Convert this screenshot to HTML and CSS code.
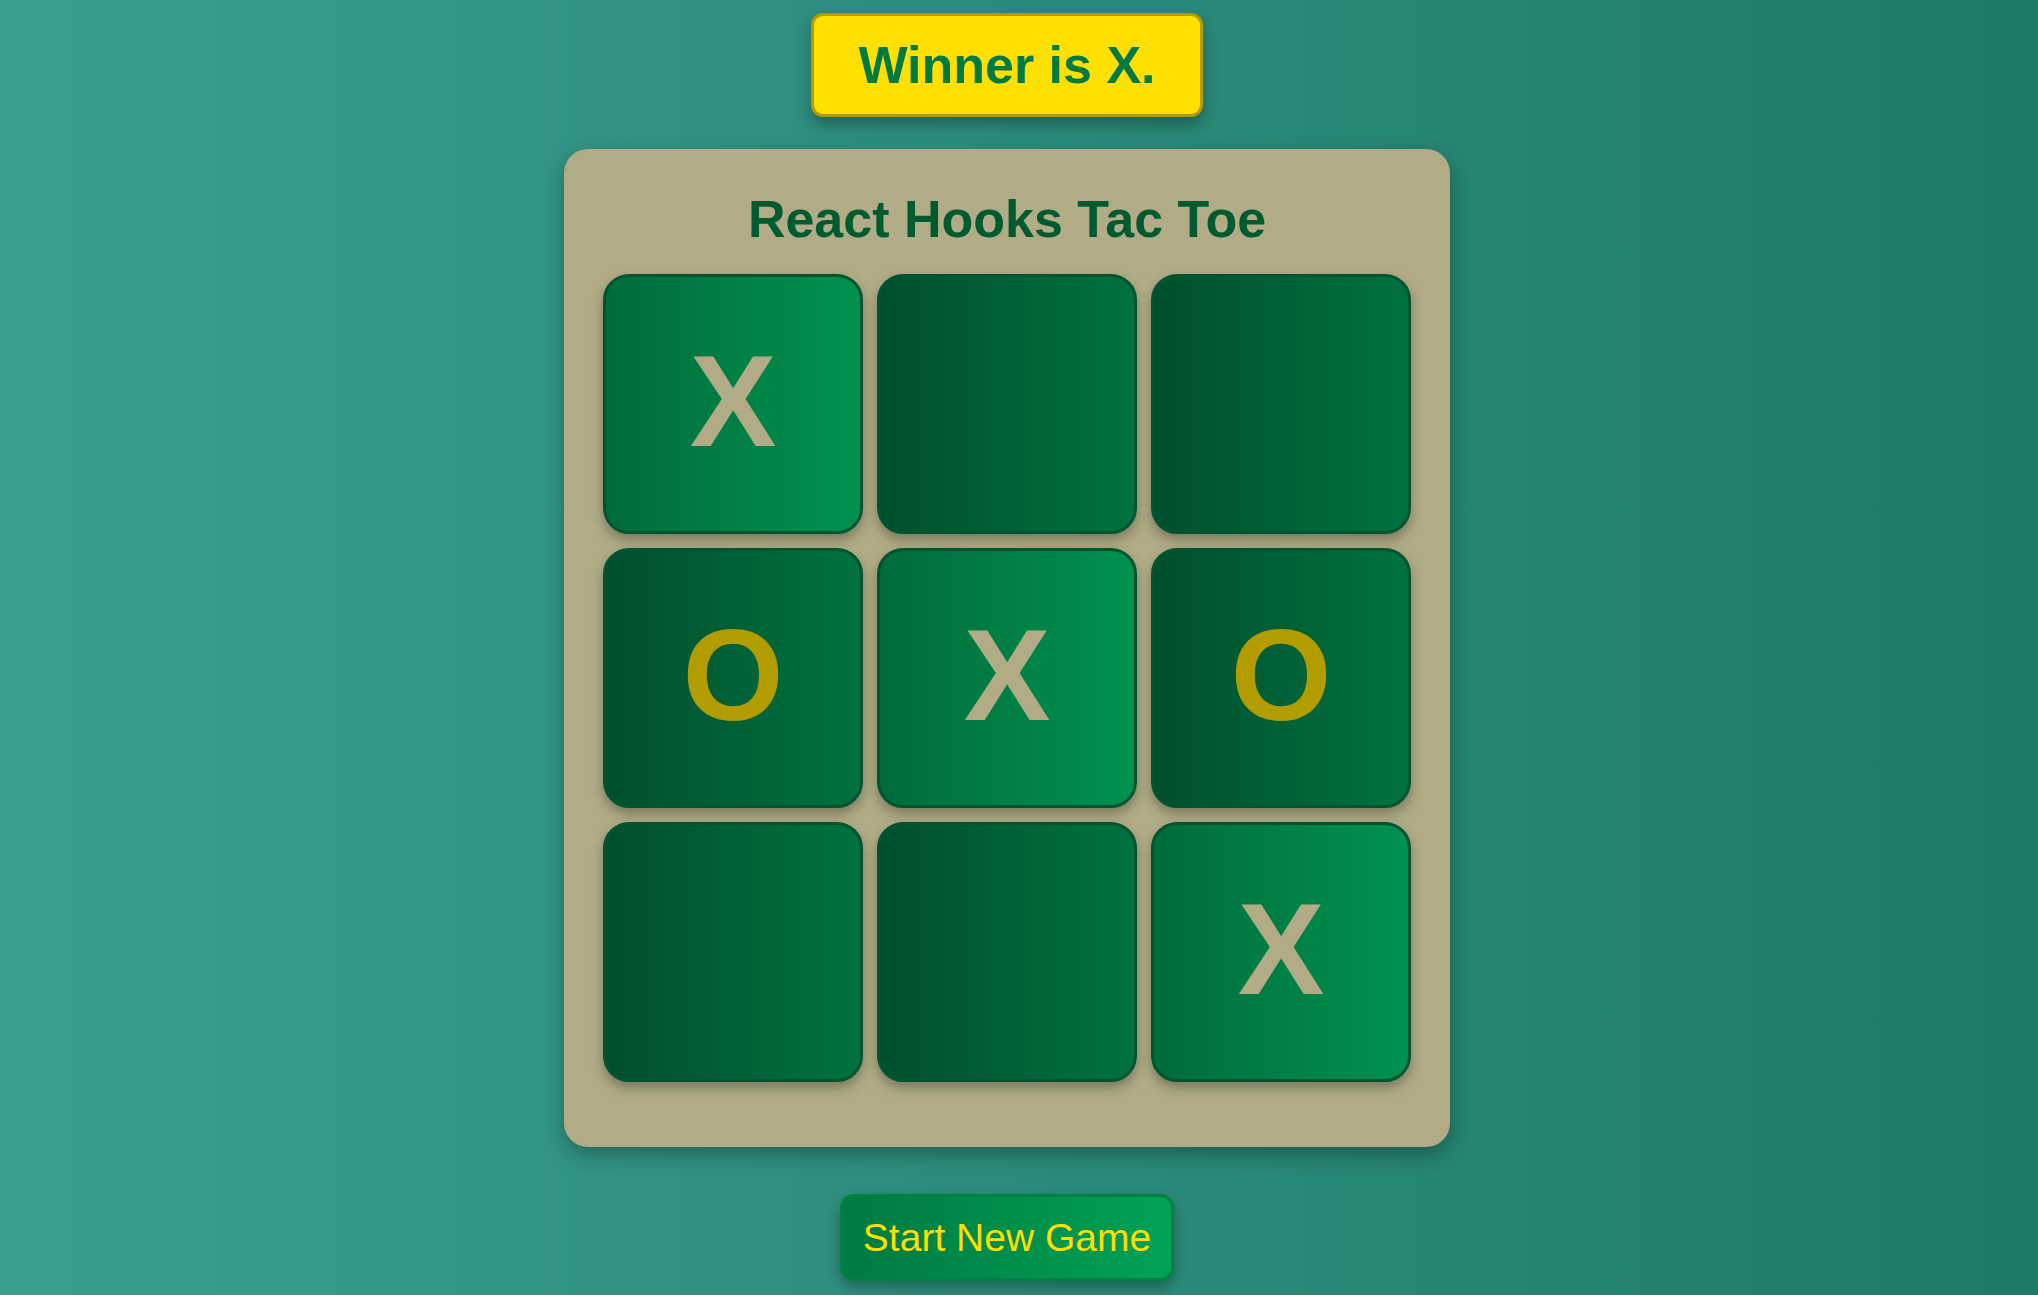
FILE: index.html
```html
<!DOCTYPE html>
<html lang="en">
<head>
<meta charset="utf-8">
<title>React Hooks Tac Toe</title>
<link rel="stylesheet" href="styles.css">
</head>
<body>
<div class="app">
  <div class="status">Winner is X.</div>
  <div class="board-panel">
    <h1 class="title">React Hooks Tac Toe</h1>
    <div class="grid">
      <div class="cell win"><span class="mark-x">X</span></div>
      <div class="cell"></div>
      <div class="cell"></div>
      <div class="cell"><span class="mark-o">O</span></div>
      <div class="cell win"><span class="mark-x">X</span></div>
      <div class="cell"><span class="mark-o">O</span></div>
      <div class="cell"></div>
      <div class="cell"></div>
      <div class="cell win"><span class="mark-x">X</span></div>
    </div>
  </div>
  <button class="new-game">Start New Game</button>
</div>
</body>
</html>
```

FILE: styles.css
```css
html, body {
  margin: 0;
  padding: 0;
  height: 100%;
}
body {
  background: linear-gradient(to right, #3a9e8f 0%, #2c8c7b 50%, #1e7a68 100%);
  font-family: "Liberation Sans", Arial, sans-serif;
  overflow: hidden;
}
.app {
  display: flex;
  flex-direction: column;
  align-items: center;
  padding: 13px 24px 0 0;
}
.status {
  background: #ffe000;
  border: 3px solid #b39c00;
  border-radius: 12px;
  color: #007a40;
  font-weight: bold;
  font-size: 52px;
  line-height: 60px;
  padding: 19px 44px;
  box-shadow: 0 8px 16px rgba(0, 0, 0, 0.3);
}
.board-panel {
  margin-top: 32px;
  width: 886px;
  box-sizing: border-box;
  background: #b1ac86;
  border-radius: 24px;
  padding: 40px 39px 65px;
  box-shadow: 0 8px 20px rgba(0, 0, 0, 0.3);
}
.title {
  margin: 0 0 25px;
  text-align: center;
  color: #005a30;
  font-size: 52px;
  line-height: 60px;
  font-weight: bold;
}
.grid {
  display: grid;
  grid-template-columns: repeat(3, 260px);
  grid-auto-rows: 260px;
  gap: 14px;
}
.cell {
  box-sizing: border-box;
  border: 3px solid #005530;
  border-radius: 26px;
  background: linear-gradient(to right, #004f2c, #00723f);
  box-shadow: 0 6px 12px rgba(0, 0, 0, 0.3);
  display: flex;
  align-items: center;
  justify-content: center;
  padding-bottom: 6px;
  font-weight: bold;
  font-size: 130px;
  line-height: 1;
}
.cell.win {
  background: linear-gradient(to right, #006c3b, #00924e);
}
.mark-x {
  color: #b1ac86;
}
.mark-o {
  color: #b39c00;
}
.new-game {
  margin-top: 47px;
  font-family: "Liberation Sans", Arial, sans-serif;
  font-size: 39px;
  line-height: 45px;
  color: #ffde00;
  background: linear-gradient(to right, #007a40, #00a256);
  border: 3px solid #008042;
  border-radius: 14px;
  padding: 18px 20px;
  box-shadow: 0 6px 14px rgba(0, 0, 0, 0.3);
  cursor: pointer;
}
```
